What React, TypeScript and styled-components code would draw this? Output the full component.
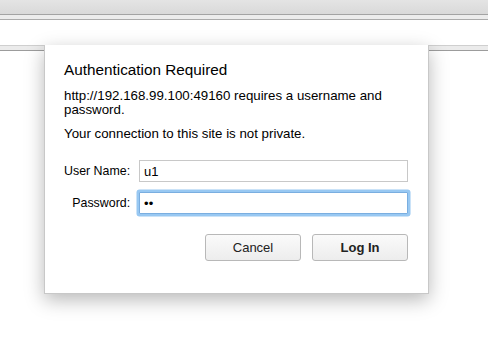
import { FC } from 'react'
import styled, { createGlobalStyle } from 'styled-components'

const GlobalStyle = createGlobalStyle`
  html, body {
    margin: 0;
    padding: 0;
    background: #ffffff;
    font-family: 'Liberation Sans', Arial, sans-serif;
  }
`

const App: FC = () => {
  return (
    <Page>
      <GlobalStyle />
      <Toolbar />
      <ToolbarFoot />
      <Gap />
      <Strip />
      <Dialog>
        <Title>Authentication Required</Title>
        <Message>
          http://192.168.99.100:49160 requires a username and password.
        </Message>
        <Note>Your connection to this site is not private.</Note>
        <Form>
          <Label htmlFor="user">User Name:</Label>
          <Input id="user" defaultValue="u1" />
          <Label htmlFor="pass">Password:</Label>
          <Input id="pass" type="password" defaultValue="aa" autoFocus $focused />
        </Form>
        <Buttons>
          <Button>Cancel</Button>
          <Button $primary>Log In</Button>
        </Buttons>
      </Dialog>
    </Page>
  )
}

export default App

const Page = styled.div`
  position: relative;
  width: 488px;
  height: 349px;
  overflow: hidden;
  background: #ffffff;
`

const Toolbar = styled.div`
  height: 14px;
  background: linear-gradient(#e4e4e4, #d9d9d9);
  border-bottom: 1px solid #a3a3a3;
`

const ToolbarFoot = styled.div`
  height: 4px;
  background: #ececec;
  border-bottom: 1px solid #ababab;
`

const Gap = styled.div`
  height: 25px;
`

const Strip = styled.div`
  height: 4px;
  background: #ebebeb;
  border-top: 1px solid #cfcfcf;
  border-bottom: 1px solid #9c9c9c;
`

const Dialog = styled.div`
  position: absolute;
  left: 44px;
  top: 45px;
  width: 385px;
  height: 249px;
  box-sizing: border-box;
  padding: 15px 20px 0 19px;
  background: #ffffff;
  border: 1px solid #c8c8c8;
  border-top: none;
  box-shadow: 0 6px 18px rgba(0, 0, 0, 0.28);
  color: #000000;
`

const Title = styled.div`
  font-size: 15.3px;
  line-height: 20px;
  margin-bottom: 9px;
`

const Message = styled.div`
  font-size: 13.3px;
  line-height: 14px;
  margin-bottom: 10px;
`

const Note = styled.div`
  font-size: 13.3px;
  line-height: 14px;
  margin-bottom: 19px;
`

const Form = styled.div`
  display: grid;
  grid-template-columns: auto 1fr;
  column-gap: 9px;
  row-gap: 10px;
  align-items: center;
`

const Label = styled.label`
  font-size: 12.4px;
  text-align: right;
  white-space: nowrap;
`

const Input = styled.input<{ $focused?: boolean }>`
  box-sizing: border-box;
  height: 22px;
  width: 100%;
  padding: 0 4px;
  font-family: 'Liberation Sans', Arial, sans-serif;
  font-size: 13px;
  color: #000000;
  caret-color: #000000;
  border: 1px solid ${(p) => (p.$focused ? '#7aaee0' : '#c8c8c8')};
  box-shadow: ${(p) => (p.$focused ? '0 0 0 2.5px #98c8f2' : 'none')};
  border-radius: ${(p) => (p.$focused ? '1px' : '0')};
  outline: none;
`

const Buttons = styled.div`
  display: flex;
  justify-content: flex-end;
  gap: 11px;
  margin-top: 20px;
`

const Button = styled.button<{ $primary?: boolean }>`
  width: 96px;
  height: 27px;
  font-family: 'Liberation Sans', Arial, sans-serif;
  font-size: 13px;
  font-weight: ${(p) => (p.$primary ? 'bold' : 'normal')};
  color: #222222;
  background: linear-gradient(#fafafa, #ededed);
  border: 1px solid #b8b8b8;
  border-radius: 3px;
`
